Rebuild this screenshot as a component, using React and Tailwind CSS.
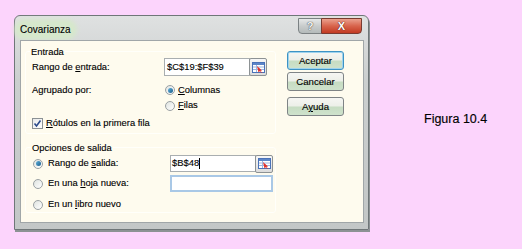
import React from "react";

const font = { fontFamily: '"Liberation Sans", Arial, sans-serif' };

const RangeButton = () => (
  <div className="w-[18px] h-[18px] -ml-px flex items-center justify-center rounded-[2px] border border-[#8d9294] bg-gradient-to-b from-[#f7f7f7] to-[#dcdcdc]">
    <svg width="13" height="11" viewBox="0 0 13 11">
      <rect x="0.5" y="0.5" width="12" height="10" fill="#ffffff" stroke="#4a72b8" />
      <rect x="1" y="1" width="11" height="2" fill="#5d86c8" />
      <line x1="1" y1="5" x2="12" y2="5" stroke="#9db6e0" />
      <line x1="1" y1="7.5" x2="12" y2="7.5" stroke="#9db6e0" />
      <line x1="4.5" y1="3" x2="4.5" y2="10" stroke="#9db6e0" />
      <path d="M5 4 L10 8.5 L8 9 L10.5 10.5 L9.5 10.8 L7.5 9.3 L6.5 10.5 Z" fill="#e0302a" />
    </svg>
  </div>
);

const Radio = ({ checked }) => (
  <div className="w-[10px] h-[10px] shrink-0 rounded-full border border-[#9aa0a3] bg-gradient-to-br from-[#dfe3e0] to-[#ffffff] flex items-center justify-center">
    {checked && <div className="w-[5px] h-[5px] rounded-full bg-gradient-to-br from-[#5fb0dc] to-[#1a5f8c]" />}
  </div>
);

const Checkbox = () => (
  <div className="w-[11px] h-[11px] shrink-0 border border-[#8b9194] bg-gradient-to-br from-[#e8eaea] to-[#ffffff] flex items-center justify-center">
    <svg width="9" height="9" viewBox="0 0 9 9">
      <path d="M1.5 4.5 L3.5 7 L7.5 1.5" fill="none" stroke="#2b4a8a" strokeWidth="1.6" />
    </svg>
  </div>
);

const DlgButton = ({ children, primary }) => (
  <div
    className={
      "w-[57px] h-[19px] flex items-center justify-center rounded-[3px] border bg-[linear-gradient(#f6f6f3_0%,#ecefe8_48%,#c6dcc2_52%,#cfe2cc_100%)] " +
      (primary ? "border-[#3d93c4] shadow-[inset_0_0_0_1px_#9ed3ee]" : "border-[#7f8486]")
    }
  >
    <span className="text-[9.6px] leading-none text-black">{children}</span>
  </div>
);

export default function App() {
  return (
    <div className="w-[522px] h-[249px] bg-[#fcd4fc] flex items-start" style={font}>
      {/* dialog */}
      <div className="ml-[14px] mt-[15px] w-[355px] flex flex-col rounded-t-[6px] border border-[#6f7678] bg-[linear-gradient(#dfe1e1,#cbcfcf_30%,#c3c7c7)] pl-[5px] pr-[4px] pb-[6px] shadow-[1px_2px_0_#8c9294] [-webkit-text-stroke:0.12px_#000]">
        {/* title bar */}
        <div className="h-[24px] flex items-start justify-between">
          <div className="mt-[6px] -ml-[3px] px-[3px] h-[15px] flex items-center rounded-full bg-[#d6e8cc] shadow-[0_0_4px_3px_#d6e8cc]">
            <span className="text-[10px] leading-none text-black">Covarianza</span>
          </div>
          <div className="mt-[2px] mr-[2px] flex [-webkit-text-stroke:0]">
            <div className="w-[24px] h-[16px] flex items-center justify-center rounded-bl-[4px] border border-[#7b8183] bg-[linear-gradient(#e6e8e8,#c8cccc_50%,#b4baba)]">
              <span className="text-[11px] font-bold leading-none text-[#f4f4f4] [text-shadow:0_0_1px_#4a4a4a,0_0_1px_#4a4a4a]">?</span>
            </div>
            <div className="w-[41px] h-[16px] -ml-px flex items-center justify-center rounded-br-[4px] border border-[#7a3a30] bg-[linear-gradient(#eaa08e,#d8644c_50%,#c23a22)]">
              <span className="text-[11px] font-bold leading-none text-white [text-shadow:0_0_1px_#5a1a10,0_0_1px_#5a1a10]">X</span>
            </div>
          </div>
        </div>

        {/* client area */}
        <div className="h-[183px] flex border border-[#a0a6a8] bg-[#fefbee] pl-[4px] pt-[5px] text-[9.4px] text-black">
          {/* left column */}
          <div className="w-[251px] flex flex-col gap-[8px]">
            <fieldset className="border border-[#fffffa] rounded-[3px] pl-[6px] pb-[3px] h-[88px]">
              <legend className="ml-[-2px] px-[1px] leading-[11px]">Entrada</legend>
              <div className="mt-[1px] h-[18px] flex items-center">
                <span className="w-[132px]">
                  Rango de <u>e</u>ntrada:
                </span>
                <div className="w-[86px] h-[18px] flex items-center border border-[#a9aeb0] bg-white pl-[2px]">
                  $C$19:$F$39
                </div>
                <RangeButton />
              </div>
              <div className="mt-[6px] h-[16px] flex items-center">
                <span className="w-[133px]">Agrupado por:</span>
                <Radio checked />
                <span className="ml-[3px]">
                  <u>C</u>olumnas
                </span>
              </div>
              <div className="h-[15px] flex items-center pl-[133px]">
                <Radio />
                <span className="ml-[3px]">
                  <u>F</u>ilas
                </span>
              </div>
              <div className="mt-[3px] h-[14px] flex items-center">
                <Checkbox />
                <span className="ml-[3px]">
                  <u>R</u>ótulos en la primera fila
                </span>
              </div>
            </fieldset>

            <fieldset className="border border-[#fffffa] rounded-[3px] pl-[7px] h-[71px]">
              <legend className="ml-[-2px] px-[1px] leading-[11px]">Opciones de salida</legend>
              <div className="mt-[2px] h-[17px] flex items-center">
                <Radio checked />
                <span className="ml-[5px] w-[122px]">
                  Rango de <u>s</u>alida:
                </span>
                <div className="w-[86px] h-[17px] flex items-center border border-[#a9aeb0] bg-white pl-[1px]">
                  $B$48<span className="w-px h-[11px] bg-black" />
                </div>
                <RangeButton />
              </div>
              <div className="mt-[3px] h-[17px] flex items-center">
                <Radio />
                <span className="ml-[5px] w-[122px]">
                  En una <u>h</u>oja nueva:
                </span>
                <div className="w-[103px] h-[17px] border-2 border-[#a9c8e6] bg-white" />
              </div>
              <div className="mt-[5px] h-[15px] flex items-center">
                <Radio />
                <span className="ml-[5px]">
                  En un <u>l</u>ibro nuevo
                </span>
              </div>
            </fieldset>
          </div>

          {/* buttons */}
          <div className="ml-[11px] mt-[5px] flex flex-col">
            <DlgButton primary>Aceptar</DlgButton>
            <div className="mt-[2px]">
              <DlgButton>Cancelar</DlgButton>
            </div>
            <div className="mt-[6px]">
              <DlgButton>
                A<u>y</u>uda
              </DlgButton>
            </div>
          </div>
        </div>
      </div>

      {/* caption */}
      <div className="ml-[55px] mt-[112px] text-[12.5px] leading-[14px] text-black [-webkit-text-stroke:0.15px_#000]">Figura 10.4</div>
    </div>
  );
}
